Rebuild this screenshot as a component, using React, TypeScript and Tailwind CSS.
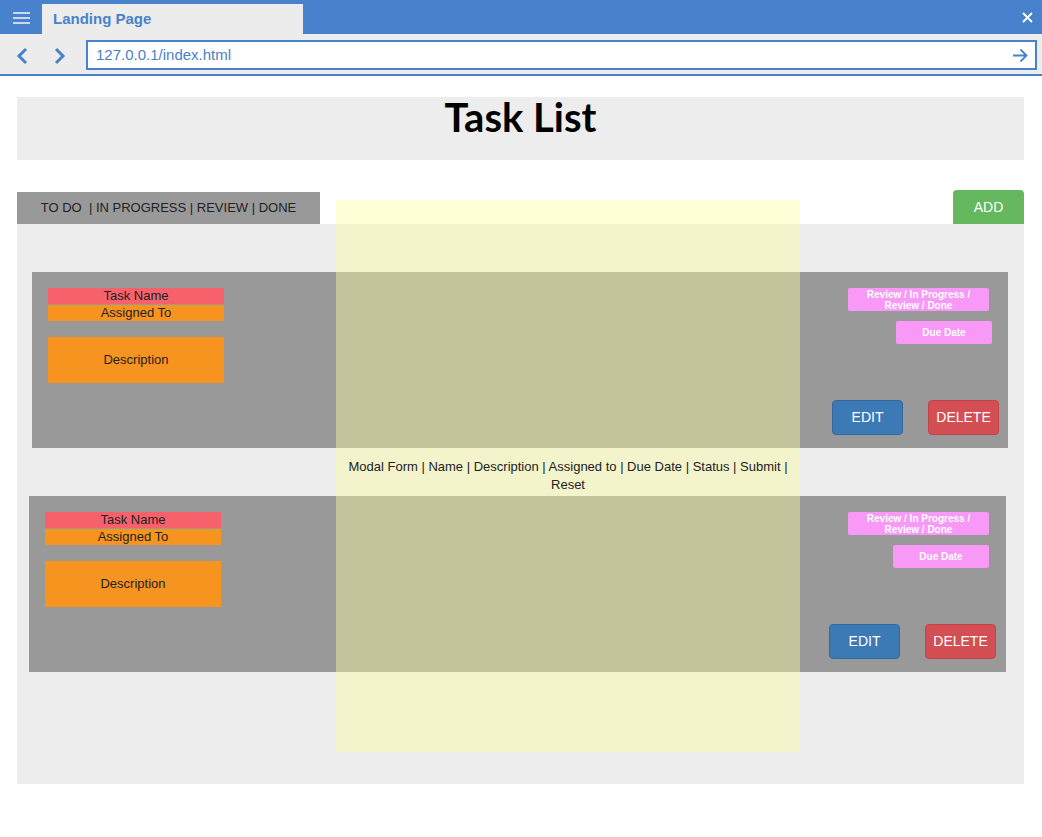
import React from "react";

type CardProps = {
  outer: string;
  rightPad: string;
  statusMr: string;
  dueMr: string;
};

function TaskCard({ outer, rightPad, statusMr, dueMr }: CardProps) {
  return (
    <div className={`flex h-[176px] justify-between bg-[#999999] ${outer}`}>
      {/* left: name / assignee / description */}
      <div className="flex flex-col pl-4 pt-4 text-center text-[13px] leading-4 text-[#222]">
        <div className="h-4 w-[176px] bg-[#f6616b]">Task Name</div>
        <div className="mt-px h-4 w-[176px] bg-[#f7941f]">Assigned To</div>
        <div className="mt-4 flex h-[46px] w-[176px] items-center justify-center bg-[#f7941f]">
          Description
        </div>
      </div>

      {/* right: status, due date, actions */}
      <div className={`flex flex-col items-end pt-4 pb-[13px] ${rightPad}`}>
        <div
          className={`flex h-[23px] w-[141px] items-center justify-center rounded-[2px] bg-[#f899f8] px-2 text-center text-[10px] font-bold leading-[11px] text-white ${statusMr}`}
        >
          Review / In Progress / Review / Done
        </div>
        <div
          className={`mt-[10px] flex h-[23px] w-[96px] items-center justify-center rounded-[2px] bg-[#f899f8] text-[10px] font-bold text-white ${dueMr}`}
        >
          Due Date
        </div>
        <div className="mt-auto flex gap-[25px]">
          <button className="h-[35px] w-[71px] rounded-[4px] border border-[#3568a0] bg-[#3c7ab6] text-[14px] text-white">
            EDIT
          </button>
          <button className="h-[35px] w-[71px] rounded-[4px] border border-[#c2434a] bg-[#d34f54] text-[14px] text-white">
            DELETE
          </button>
        </div>
      </div>
    </div>
  );
}

function BrowserChrome() {
  return (
    <div>
      <div className="flex h-[34px] items-end bg-[#4882cc]">
        <div className="flex h-[34px] w-[42px] items-center justify-center pt-px">
          <svg width="17" height="14" viewBox="0 0 17 14">
            <g stroke="#c9d7ef" strokeWidth="2">
              <line x1="0" y1="2" x2="17" y2="2" />
              <line x1="0" y1="7" x2="17" y2="7" />
              <line x1="0" y1="12" x2="17" y2="12" />
            </g>
          </svg>
        </div>
        <div className="flex h-[30px] w-[261px] items-center bg-[#ececec] pl-[11px] text-[15px] font-bold text-[#4882cc]">
          Landing Page
        </div>
        <div className="flex-1" />
        <div className="flex h-[34px] items-center pr-[9px]">
          <svg width="11" height="11" viewBox="0 0 11 11">
            <path d="M1 1 L10 10 M10 1 L1 10" stroke="white" strokeWidth="1.8" />
          </svg>
        </div>
      </div>
      <div className="flex h-[40px] items-start bg-[#ececec] pt-[6px]">
        <div className="flex h-[30px] items-center gap-[26px] pl-[16px] pt-px">
          <svg width="12" height="18" viewBox="0 0 12 18">
            <polyline points="10,2 3,9 10,16" fill="none" stroke="#4882cc" strokeWidth="3" />
          </svg>
          <svg width="12" height="18" viewBox="0 0 12 18">
            <polyline points="2,2 9,9 2,16" fill="none" stroke="#4882cc" strokeWidth="3" />
          </svg>
        </div>
        <div className="ml-[20px] mr-[5px] flex h-[30px] flex-1 items-center justify-between border-2 border-[#4882cc] bg-white pl-[8px] pr-[7px] pt-px text-[15px] text-[#4882cc]">
          <span>127.0.0.1/index.html</span>
          <svg width="16" height="15" viewBox="0 0 16 15">
            <path d="M1 7.5 H14.5 M8.5 1.5 L14.5 7.5 L8.5 13.5" fill="none" stroke="#4882cc" strokeWidth="1.8" />
          </svg>
        </div>
      </div>
      <div className="h-[2px] bg-[#4882cc]" />
    </div>
  );
}

export default function App() {
  return (
    <div className="relative min-h-[837px] bg-white font-['Liberation_Sans',Arial,sans-serif]">
      <BrowserChrome />

      <main className="pl-[17px] pr-[18px] pt-[21px]">
        {/* Title */}
        <header className="h-[63px] bg-[#ededed] text-center">
          <h1 className="font-['Lato',sans-serif] text-[40px] font-bold leading-[41px] text-black">
            Task List
          </h1>
        </header>

        {/* Filters + add */}
        <div className="mt-[30px] flex items-end justify-between">
          <div className="flex h-[32px] w-[303px] items-center justify-center bg-[#999999] text-[13px] text-[#222]">
            TO DO&nbsp; | IN PROGRESS | REVIEW | DONE
          </div>
          <button className="h-[34px] w-[71px] rounded-t-[4px] bg-[#65b85e] text-[14px] text-white">
            ADD
          </button>
        </div>

        {/* Task board */}
        <section className="flex h-[560px] flex-col gap-[48px] bg-[#ededed] pt-[48px]">
          <TaskCard outer="ml-[15px] mr-[16px]" rightPad="pr-[9px]" statusMr="mr-[10px]" dueMr="mr-[7px]" />
          <TaskCard outer="ml-[12px] mr-[18px]" rightPad="pr-[10px]" statusMr="mr-[7px]" dueMr="mr-[7px]" />
        </section>
      </main>

      {/* Modal placeholder */}
      <div className="absolute left-[336px] top-[200px] flex h-[552px] w-[464px] items-center justify-center bg-[rgba(255,255,160,0.42)] px-[10px] text-center text-[13px] leading-[18px] text-[#222]">
        Modal Form | Name | Description | Assigned to | Due Date | Status | Submit | Reset
      </div>
    </div>
  );
}
